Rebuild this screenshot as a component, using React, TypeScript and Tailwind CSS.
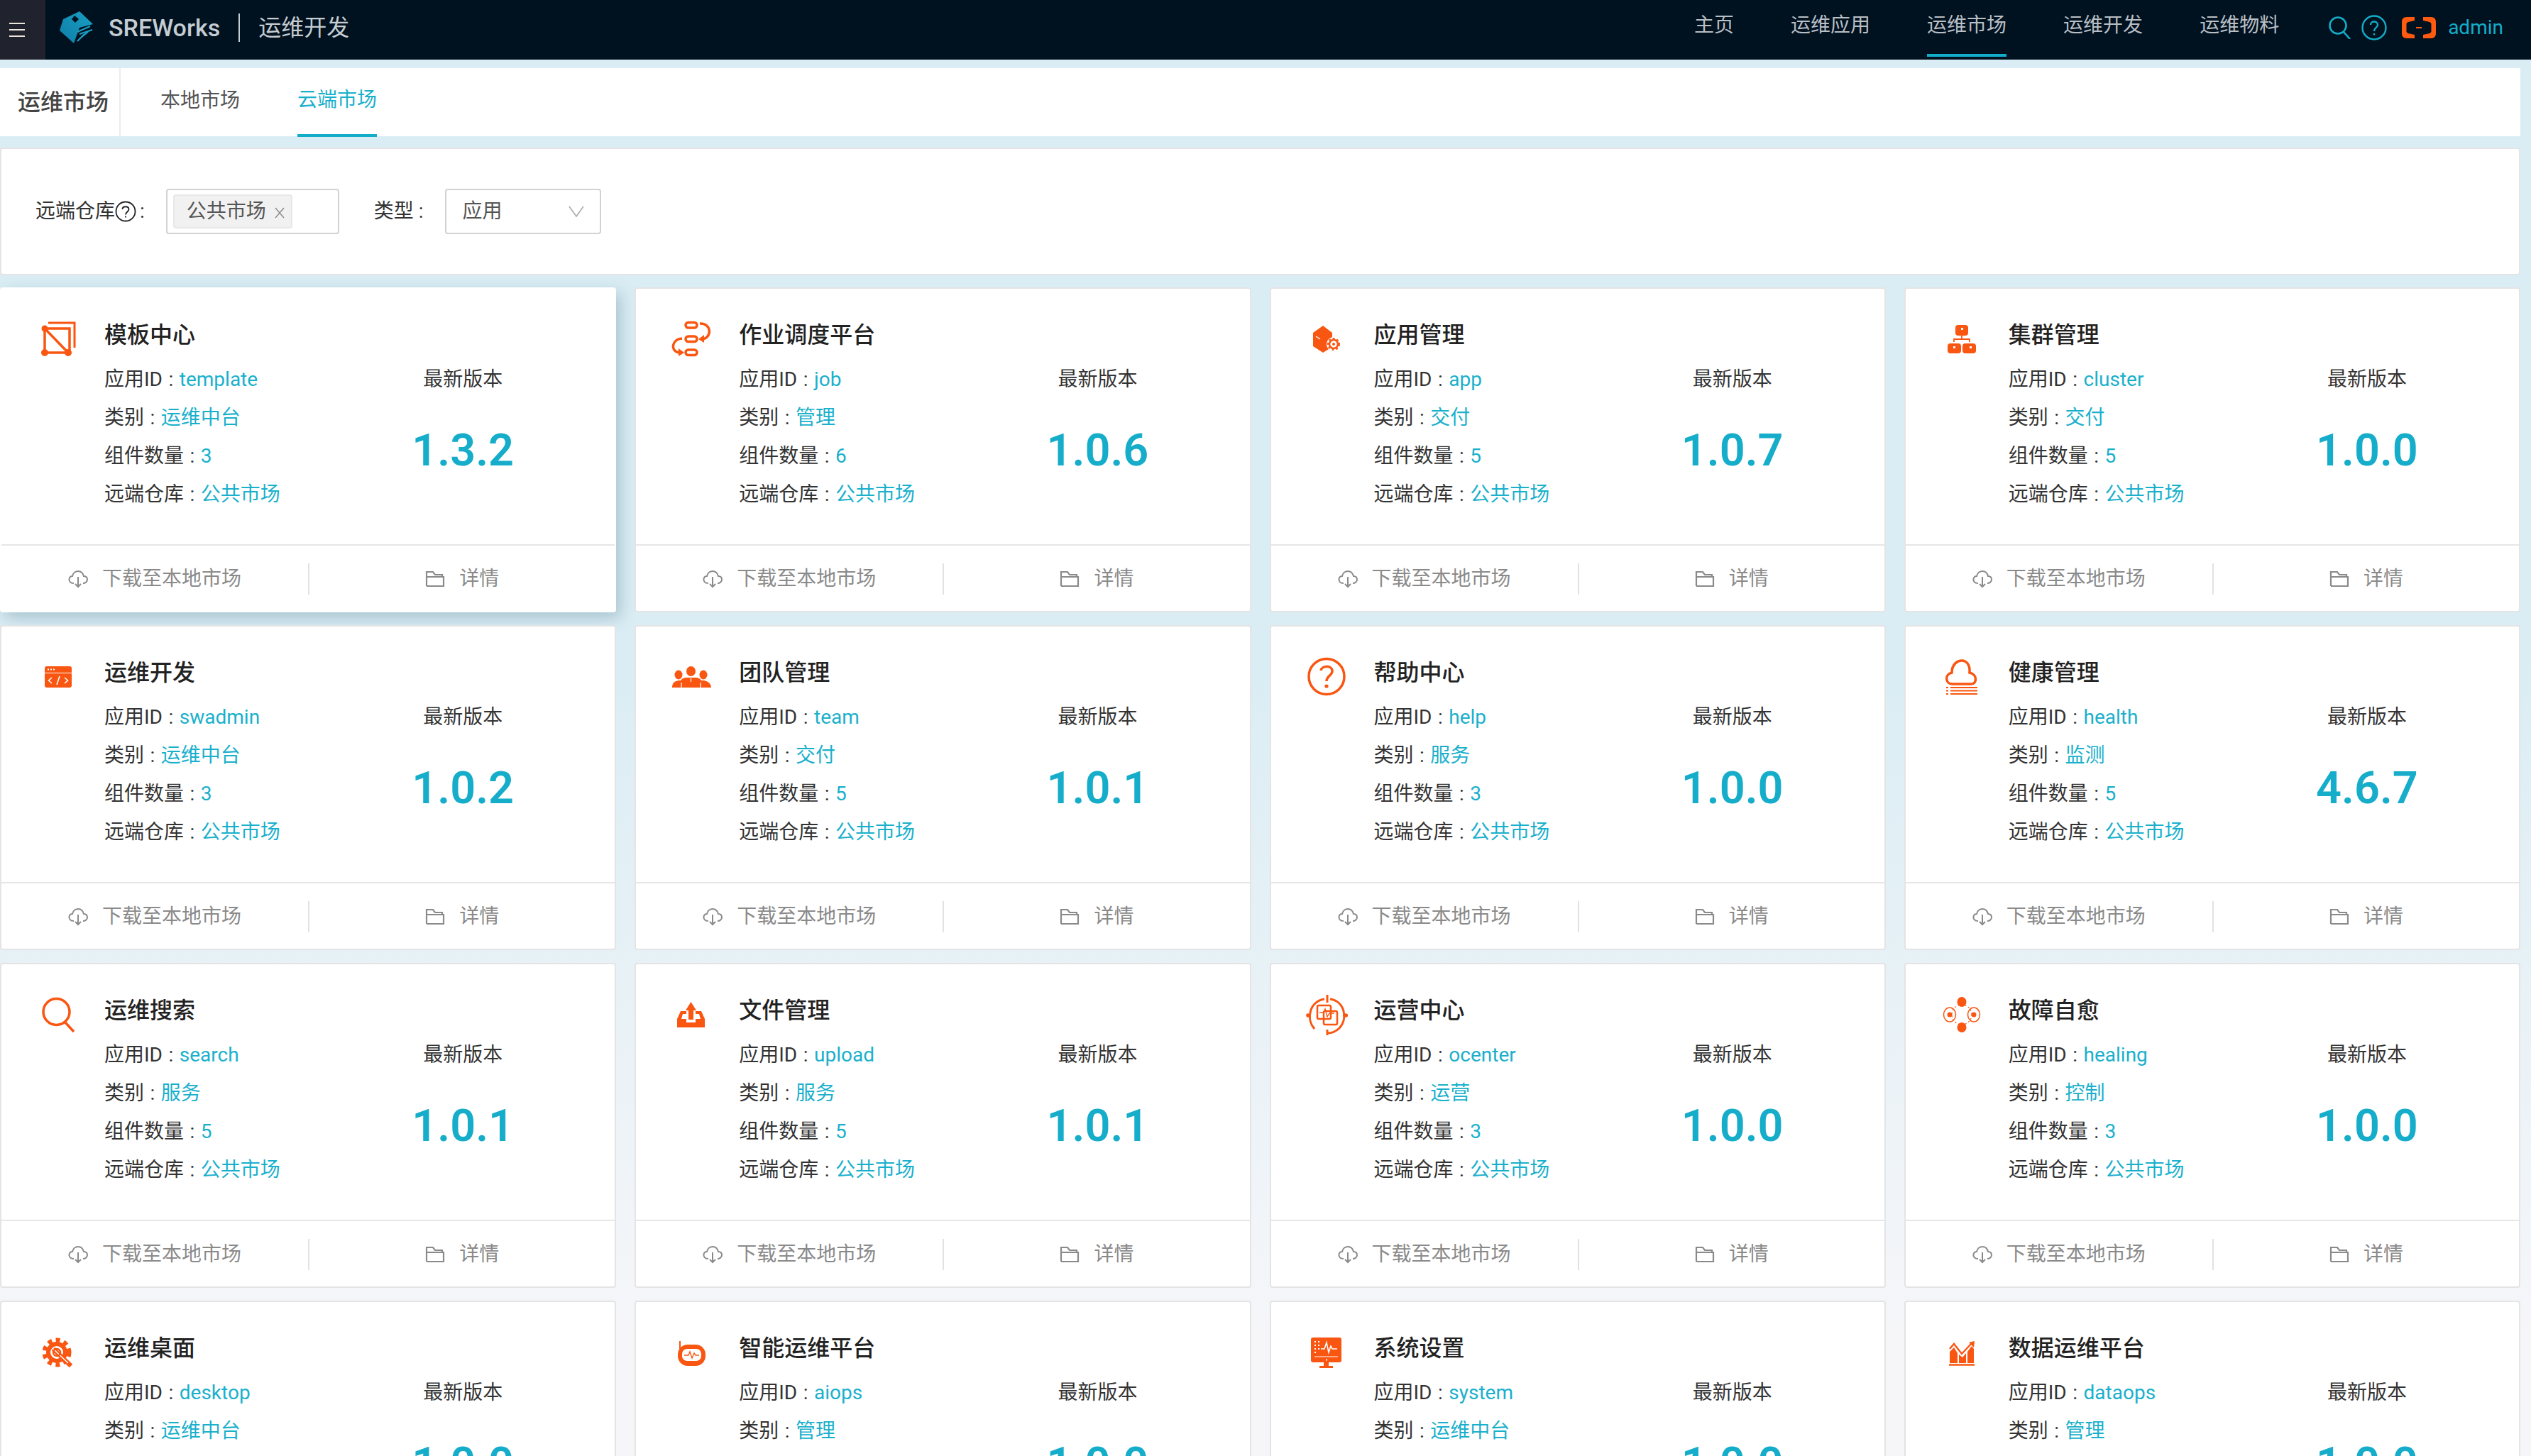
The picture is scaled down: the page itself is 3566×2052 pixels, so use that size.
import type { ReactNode } from 'react';

const ORANGE = '#f95611';

// every market icon sits in a 60x60 box
function IconBox({ children }: { children: ReactNode }) {
  return (
    <svg viewBox="0 0 60 60" className="w-[60px] h-[60px] shrink-0" fill="none">
      {children}
    </svg>
  );
}

const icons: Record<string, ReactNode> = {
  template: (
    <IconBox>
      <path d="M17 8H54V43" stroke={ORANGE} strokeWidth="3" />
      <path d="M12 16H47V50H12ZM12 16L45 50" stroke={ORANGE} strokeWidth="3.5" />
      <circle cx="12" cy="16" r="4.5" fill={ORANGE} />
      <circle cx="12" cy="50" r="5" fill={ORANGE} />
      <circle cx="45" cy="50" r="5" fill={ORANGE} />
    </IconBox>
  ),
  job: (
    <IconBox>
      <rect x="21" y="7.5" width="16" height="7.5" rx="3.7" stroke={ORANGE} strokeWidth="3.5" />
      <rect x="21" y="27" width="16" height="7.5" rx="3.7" stroke={ORANGE} strokeWidth="3.5" />
      <rect x="21" y="46" width="16" height="7.5" rx="3.7" stroke={ORANGE} strokeWidth="3.5" />
      <path d="M41 9C57 8 59 28 45 31" stroke={ORANGE} strokeWidth="3.5" />
      <path d="M47 25L39 31L47 36Z" fill={ORANGE} />
      <path d="M16 30C1 31 -1 48 12 50" stroke={ORANGE} strokeWidth="3.5" />
      <path d="M11 44L19 50L11 55Z" fill={ORANGE} />
    </IconBox>
  ),
  app: (
    <IconBox>
      <path d="M24 12L37 22V42L24 50L10 41V22Z" fill={ORANGE} />
      <path d="M14 27L20 31" stroke="#fff" strokeWidth="1.5" />
      <circle cx="39" cy="38" r="10" fill="#fff" />
      <circle cx="39" cy="38" r="6" stroke={ORANGE} strokeWidth="2.5" />
      <circle cx="39" cy="38" r="8" stroke={ORANGE} strokeWidth="2" strokeDasharray="3 3" />
      <circle cx="39" cy="38" r="2" fill={ORANGE} />
    </IconBox>
  ),
  cluster: (
    <IconBox>
      <rect x="21" y="11" width="18" height="15" rx="4" fill={ORANGE} />
      <rect x="10" y="37" width="19" height="14" rx="4" fill={ORANGE} />
      <rect x="31" y="37" width="19" height="14" rx="4" fill={ORANGE} />
      <path d="M30 26V31M19 35V31H41V35" stroke={ORANGE} strokeWidth="1.8" />
      <rect x="29" y="15" width="3" height="3" fill="#fff" />
      <rect x="18" y="41" width="3" height="3" fill="#fff" />
      <rect x="41" y="41" width="3" height="3" fill="#fff" />
    </IconBox>
  ),
  swadmin: (
    <IconBox>
      <rect x="12" y="16" width="38" height="30" rx="3" fill={ORANGE} />
      <path d="M12 25.500H50" stroke="#fff" strokeWidth="1.2" />
      <path d="M16 20.500H18M20 20.500H22M24 20.500H26" stroke="#fff" strokeWidth="1.8" />
      <path d="M22 32L17.500 36L22 40M40 32L44.500 36L40 40M33 30L29 42" stroke="#fff" strokeWidth="1.6" />
    </IconBox>
  ),
  team: (
    <IconBox>
      <ellipse cx="11" cy="28" rx="5.5" ry="6.5" fill={ORANGE} />
      <ellipse cx="46" cy="28" rx="5.5" ry="6.5" fill={ORANGE} />
      <ellipse cx="28.5" cy="23" rx="6.5" ry="7" fill={ORANGE} />
      <path d="M2 46C2 39 6 37 11 36H14C16 33 19 32 22 32H35C39 32 41 33 43 36H47C52 37 57 40 57 46Z" fill={ORANGE} />
      <path d="M15 39V46M42 39V46M28.500 33V38" stroke="#fff" strokeWidth="1.2" />
    </IconBox>
  ),
  help: (
    <IconBox>
      <circle cx="29" cy="30.5" r="25" stroke={ORANGE} strokeWidth="3.5" />
      <path d="M21 22C22 15 36 14 37 22C38 29 29 29 29 37" stroke={ORANGE} strokeWidth="3.5" />
      <circle cx="29" cy="44" r="2.6" fill={ORANGE} />
    </IconBox>
  ),
  health: (
    <IconBox>
      <path d="M17 41C6 41 6 27 16 25C16 12 25 8 30 8C36 8 42 13 41 25C52 27 52 41 43 41Z" stroke={ORANGE} strokeWidth="3.5" />
      <path d="M8 46H11M14 46H52M8 50.500H11M14 50.500H52M8 55H11M14 55H52" stroke={ORANGE} strokeWidth="2.2" />
    </IconBox>
  ),
  search: (
    <IconBox>
      <circle cx="28.5" cy="27" r="18.5" stroke={ORANGE} strokeWidth="3.5" />
      <path d="M41 42L53 55" stroke={ORANGE} strokeWidth="3.5" />
    </IconBox>
  ),
  upload: (
    <IconBox>
      <path d="M28.500 13L36 25H32V38H25V25H21Z" fill={ORANGE} />
      <path d="M14 26H22V30H17L15 37H22V42H35V37H42L40 30H35V26H43L48 37V49H9V37Z" fill={ORANGE} />
    </IconBox>
  ),
  ocenter: (
    <IconBox>
      <path d="M12 51C-1 36 6 12 26 9M34 9C54 12 60 36 47 50C42 55 36 57 30 57" stroke={ORANGE} strokeWidth="3" />
      <path d="M30 3V14M1 32H7M52 32H59M30 52V62" stroke={ORANGE} strokeWidth="3" />
      <circle cx="3" cy="32" r="2.8" fill={ORANGE} />
      <circle cx="56" cy="32" r="2.8" fill={ORANGE} />
      <rect x="16" y="18" width="19" height="19" rx="2" stroke={ORANGE} strokeWidth="2.5" />
      <rect x="25" y="26" width="19" height="19" rx="2" stroke={ORANGE} strokeWidth="2.5" />
      <path d="M19 28H25L27 23L30 34L33 29H40" stroke={ORANGE} strokeWidth="1.4" />
    </IconBox>
  ),
  healing: (
    <IconBox>
      <ellipse cx="30" cy="13" rx="6.5" ry="7" fill={ORANGE} />
      <ellipse cx="30" cy="49" rx="6.5" ry="7" fill={ORANGE} />
      <ellipse cx="13" cy="31" rx="8.5" ry="10" stroke={ORANGE} strokeWidth="1.5" />
      <ellipse cx="47" cy="31" rx="8.5" ry="10" stroke={ORANGE} strokeWidth="1.5" />
      <circle cx="13" cy="31" r="3.5" fill={ORANGE} />
      <circle cx="47" cy="31" r="3.5" fill={ORANGE} />
      <circle cx="30" cy="31" r="14" stroke={ORANGE} strokeWidth="1.2" strokeDasharray="2 3" />
    </IconBox>
  ),
  desktop: (
    <IconBox>
      <circle cx="29" cy="31" r="12" stroke={ORANGE} strokeWidth="6" />
      <circle cx="29" cy="31" r="17.500" stroke={ORANGE} strokeWidth="6" strokeDasharray="6 5.500" />
      <path d="M24 26L49 50" stroke={ORANGE} strokeWidth="6.500" />
      <path d="M24 26L45 46" stroke="#fff" strokeWidth="1.5" />
      <circle cx="29" cy="31" r="5" stroke={ORANGE} strokeWidth="2.5" />
    </IconBox>
  ),
  aiops: (
    <IconBox>
      <path d="M13 15V26" stroke={ORANGE} strokeWidth="2" />
      <rect x="10" y="20" width="39" height="30" rx="14" fill={ORANGE} />
      <rect x="16" y="26" width="27" height="17" rx="7" fill="#fff" />
      <path d="M19 35H25L27 30L30 39L33 32L35 35H40" stroke={ORANGE} strokeWidth="1.4" />
    </IconBox>
  ),
  system: (
    <IconBox>
      <rect x="7" y="10" width="43" height="35" rx="3" fill={ORANGE} />
      <path d="M12 37H45" stroke="#fff" strokeWidth="1.2" />
      <path d="M12 16H14M17 16H19M12 21H14M17 21H19M12 26H14M17 26H19M12 31H14" stroke="#fff" strokeWidth="1.8" />
      <path d="M21 26H26L29 17L32 31L35 22L37 26H44" stroke="#fff" strokeWidth="1.6" />
      <path d="M25 45H32V50H25Z" fill={ORANGE} />
      <path d="M19 51.500H38" stroke={ORANGE} strokeWidth="3" />
      <rect x="28" y="40.500" width="2" height="2" fill="#fff" />
    </IconBox>
  ),
  dataops: (
    <IconBox>
      <path d="M13 46V30L19 24L24 32V46ZM26 46V34L31 38L36 32V46ZM38 46V30L44 22L47 26V46Z" fill={ORANGE} />
      <path d="M13 26L19 19L30 33L44 18" stroke={ORANGE} strokeWidth="2.4" />
      <path d="M40 17L48 15L47 24Z" fill={ORANGE} />
      <path d="M12 48.500H48" stroke={ORANGE} strokeWidth="2.5" />
    </IconBox>
  ),
};

const apps = [
  { key: 'template', name: '模板中心', category: '运维中台', count: 3, version: '1.3.2' },
  { key: 'job', name: '作业调度平台', category: '管理', count: 6, version: '1.0.6' },
  { key: 'app', name: '应用管理', category: '交付', count: 5, version: '1.0.7' },
  { key: 'cluster', name: '集群管理', category: '交付', count: 5, version: '1.0.0' },
  { key: 'swadmin', name: '运维开发', category: '运维中台', count: 3, version: '1.0.2' },
  { key: 'team', name: '团队管理', category: '交付', count: 5, version: '1.0.1' },
  { key: 'help', name: '帮助中心', category: '服务', count: 3, version: '1.0.0' },
  { key: 'health', name: '健康管理', category: '监测', count: 5, version: '4.6.7' },
  { key: 'search', name: '运维搜索', category: '服务', count: 5, version: '1.0.1' },
  { key: 'upload', name: '文件管理', category: '服务', count: 5, version: '1.0.1' },
  { key: 'ocenter', name: '运营中心', category: '运营', count: 3, version: '1.0.0' },
  { key: 'healing', name: '故障自愈', category: '控制', count: 3, version: '1.0.0' },
  { key: 'desktop', name: '运维桌面', category: '运维中台', count: 3, version: '1.0.0' },
  { key: 'aiops', name: '智能运维平台', category: '管理', count: 5, version: '1.0.0' },
  { key: 'system', name: '系统设置', category: '运维中台', count: 3, version: '1.0.0' },
  { key: 'dataops', name: '数据运维平台', category: '管理', count: 5, version: '1.0.0' },
];

const navItems = ['主页', '运维应用', '运维市场', '运维开发', '运维物料'];

function Logo() {
  return (
    <svg viewBox="0 0 48 46" className="w-[48px] h-[46px] shrink-0" fill="none">
      <defs>
        <linearGradient id="logoFill" x1="0" y1="1" x2="1" y2="0">
          <stop offset="0" stopColor="#0f7ea8" />
          <stop offset="1" stopColor="#1a9fc4" />
        </linearGradient>
      </defs>
      <path d="M28 0L47 18L28 23L20 45L0 27L5 11Z" fill="url(#logoFill)" />
      <path d="M21 6L27 11L22 16L17 11Z" fill="#00111f" />
      <path d="M25 29L43 21M28 32L46 26M30 37L40 29M25 42L35 32" stroke="#1a9fc4" strokeWidth="2.2" />
    </svg>
  );
}

function Header() {
  return (
    <div className="flex h-[84px] bg-[#00111f] pr-[39px]">
      <div className="flex h-full w-[64px] flex-col justify-center gap-[7px] bg-[#20222e] pl-[13px]">
        <span className="block h-[2px] w-[22px] bg-[#e9e5da]" />
        <span className="block h-[2px] w-[22px] bg-[#e9e5da]" />
        <span className="block h-[2px] w-[22px] bg-[#e9e5da]" />
      </div>
      <div className="ml-[20px] flex items-center pb-[6px]">
        <Logo />
        <span className="ml-[21px] text-[34px] font-medium text-[#c5ccd2]">SREWorks</span>
        <span className="ml-[26px] h-[40px] w-[2px] bg-[#c5ccd2]" />
        <span className="ml-[26px] text-[32px] text-[#c5ccd2]">运维开发</span>
      </div>
      <div className="ml-auto flex gap-[80px]">
        {navItems.map((item) => (
          <div
            key={item}
            className={`h-[80px] border-b-4 text-[28px] leading-[71px] text-[#b9bfc5] ${
              item === '运维市场' ? 'border-[#14adc9]' : 'border-transparent'
            }`}
          >
            {item}
          </div>
        ))}
      </div>
      <div className="ml-[70px] flex items-center gap-[14px] pb-[6px]">
        <svg viewBox="0 0 32 32" className="w-[32px] h-[32px]" fill="none" stroke="#14adc9" strokeWidth="2.6">
          <circle cx="13" cy="13" r="11.500" />
          <path d="M21 22L30 32" />
        </svg>
        <svg viewBox="0 0 36 36" className="w-[36px] h-[36px]" fill="none" stroke="#14adc9" strokeWidth="2.4">
          <circle cx="18" cy="18" r="16.500" />
          <path d="M13 14C13 8 23 8 23 14C23 18 18 18 18 23" />
          <path d="M18 26V28.500" />
        </svg>
        <svg viewBox="0 0 48 30" className="ml-[7px] w-[48px] h-[30px]" fill="none">
          <path d="M18 0H7C2 0 0 3 0 7V23C0 27 2 30 7 30H18V25L9 23C7 22 6.500 21 6.500 20V10C6.500 9 7 8 9 7L18 5Z" fill="#ff5a10" />
          <path d="M30 0H41C46 0 48 3 48 7V23C48 27 46 30 41 30H30V25L39 23C41 22 41.500 21 41.500 20V10C41.500 9 41 8 39 7L30 5Z" fill="#ff5a10" />
          <path d="M20 15H28" stroke="#ff5a10" strokeWidth="2" />
        </svg>
        <span className="ml-[3px] text-[28px] text-[#14adc9]">admin</span>
      </div>
    </div>
  );
}

function TabBar() {
  return (
    <div className="mt-[12px] mr-[15px] flex h-[96px] items-center bg-white">
      <div className="flex h-[96px] w-[170px] items-center border-r-2 border-[#ececec] pl-[25px] text-[32px] font-medium whitespace-nowrap text-[#444]">
        运维市场
      </div>
      <div className="ml-[56px] flex items-center gap-[81px] text-[28px]">
        <div className="flex h-[96px] items-center pb-[4px] text-[#555]">本地市场</div>
        <div className="flex h-[98px] items-center border-b-4 border-[#14adc9] pb-[2px] text-[#1ab0cc]">云端市场</div>
      </div>
    </div>
  );
}

function FilterCard() {
  return (
    <div className="mt-[16px] mr-[15px] flex h-[180px] items-center rounded border-2 border-[#e4e4e4] bg-white pl-[48px] text-[28px] text-[#333]">
      <span className="flex items-center">
        远端仓库
        <svg viewBox="0 0 30 30" className="w-[30px] h-[30px]" fill="none" stroke="#222" strokeWidth="1.8">
          <circle cx="15" cy="15" r="13.500" />
          <path d="M10.500 12C10.500 7 19.500 7 19.500 12C19.500 15.500 15 15.500 15 19.500" />
          <path d="M15 21.500V23.500" />
        </svg>
        <span className="ml-[5px]">:</span>
      </span>
      <div className="ml-[30px] flex h-[64px] w-[244px] items-center rounded border-2 border-[#d2d2d2] pl-[8px]">
        <div className="flex h-[48px] w-[168px] items-center rounded border-2 border-[#e8e8e8] bg-[#f1f1f1] pl-[17px] text-[#555]">
          公共市场
          <svg viewBox="0 0 16 16" className="ml-[11px] mt-[4px] w-[16px] h-[16px]" fill="none" stroke="#888" strokeWidth="1.4">
            <path d="M2 1L14 15M14 1L2 15" />
          </svg>
        </div>
      </div>
      <span className="ml-[49px]">类型 :</span>
      <div className="ml-[30px] flex h-[64px] w-[220px] items-center justify-between rounded border-2 border-[#d2d2d2] pr-[22px] pl-[23px] text-[#555]">
        应用
        <svg viewBox="0 0 22 16" className="w-[22px] h-[16px]" fill="none" stroke="#aaa" strokeWidth="1.6">
          <path d="M1 1L11 15L21 1" />
        </svg>
      </div>
    </div>
  );
}

function CardRow({ label, value }: { label: string; value: string | number }) {
  return (
    <div className="h-[54px] leading-[54px] whitespace-nowrap text-[#333]">
      {label}
      <span className="mx-[8.5px]">:</span>
      <span className="text-[#1ab0cc]">{value}</span>
    </div>
  );
}

function AppCard({ app, hovered }: { app: (typeof apps)[number]; hovered: boolean }) {
  return (
    <div
      className={`flex h-[458px] flex-col rounded border-2 bg-white text-[28px] ${
        hovered ? 'border-white shadow-[6px_8px_22px_rgba(20,70,100,0.25)]' : 'border-[#e4e4e4]'
      }`}
    >
      <div className="flex flex-1 pt-[38px]">
        <div className="flex w-1/2">
          <div className="w-[145px] shrink-0 pt-[2px] pl-[49px]">{icons[app.key]}</div>
          <div>
            <div className="h-[54px] text-[32px] leading-[54px] font-medium whitespace-nowrap text-[#222]">
              {app.name}
            </div>
            <div className="mt-[9px]">
              <CardRow label="应用ID" value={app.key} />
              <CardRow label="类别" value={app.category} />
              <CardRow label="组件数量" value={app.count} />
              <CardRow label="远端仓库" value="公共市场" />
            </div>
          </div>
        </div>
        <div className="flex w-1/2 flex-col items-center pt-[63px] pl-[4px]">
          <div className="h-[54px] leading-[54px] text-[#333]">最新版本</div>
          <div className="mt-[37px] text-[63px] leading-[72px] font-semibold text-[#16adca]">{app.version}</div>
        </div>
      </div>
      <div className="flex h-[94px] items-center border-t-2 border-[#e6e6e6] pt-[2px] text-[#8a8a8a]">
        <div className="flex w-1/2 items-center justify-center gap-[20px]">
          <svg viewBox="0 0 28 28" className="w-[28px] h-[28px]" fill="none" stroke="#8a8a8a" strokeWidth="2">
            <path d="M8 20C3 20 1 17 1.500 14C2 11 4 10 6 10C7 5 11 3 14 3C18 3 21 6 22 10C25 10 27 12 27 15C27 18 24 20 21 20" />
            <path d="M14 11V25M10 21L14 25L18 21" />
          </svg>
          下载至本地市场
        </div>
        <div className="flex h-[44px] w-1/2 items-center justify-center gap-[20px] border-l-2 border-[#e2e2e2]">
          <svg viewBox="0 0 28 24" className="w-[28px] h-[24px]" fill="none" stroke="#8a8a8a" strokeWidth="2.2">
            <path d="M2 22V2H11L14 6H24V9M2 9H26V22H2" />
          </svg>
          详情
        </div>
      </div>
    </div>
  );
}

export default function App() {
  return (
    <div className="h-screen overflow-hidden bg-[linear-gradient(180deg,#daedf4_0%,#daedf4_45%,#f6f6f9_92%)] font-['Roboto','Noto_Sans_CJK_SC',sans-serif]">
      <Header />
      <TabBar />
      <FilterCard />
      <div className="mt-[17px] mr-[15px] grid grid-cols-4 gap-x-[26px] gap-y-[18px]">
        {apps.map((app, i) => (
          <AppCard key={app.key} app={app} hovered={i === 0} />
        ))}
      </div>
    </div>
  );
}
